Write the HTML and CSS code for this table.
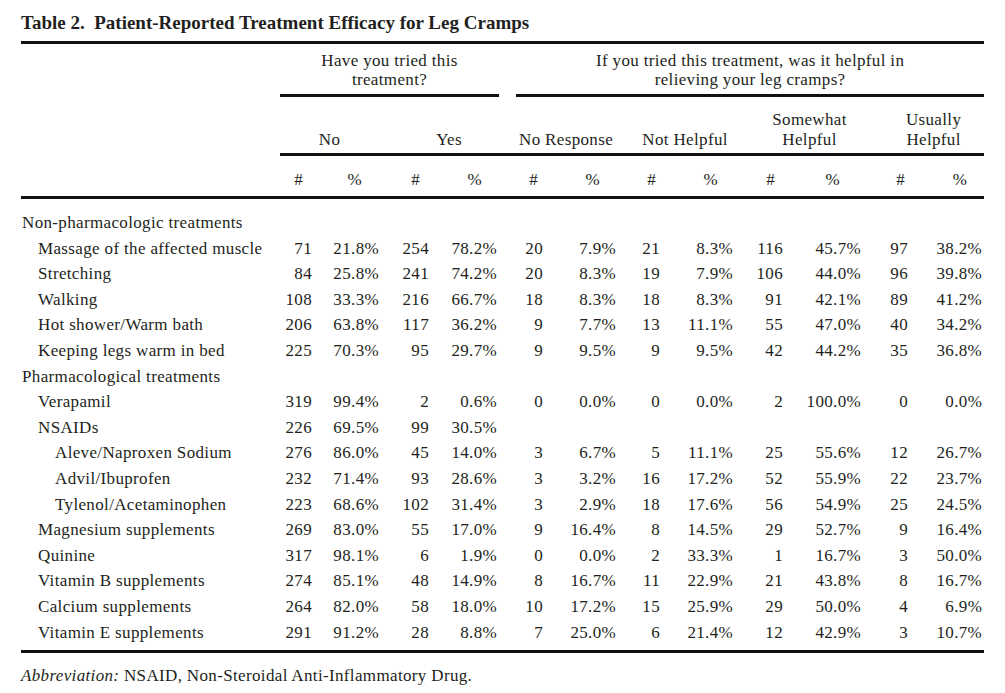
FILE: index.html
```html
<!DOCTYPE html>
<html lang="en">
<head>
<meta charset="utf-8">
<title>Table 2</title>
<link rel="stylesheet" href="styles.css">
</head>
<body>
<div class="page">
  <h1 class="title">Table 2.&nbsp; Patient-Reported Treatment Efficacy for Leg Cramps</h1>
  <table class="data">
    <colgroup>
      <col class="w-label">
      <col class="w-32"><col class="w-67"><col class="w-50"><col class="w-70">
      <col class="w-17">
      <col class="w-27"><col class="w-73"><col class="w-44"><col class="w-73">
      <col class="w-50"><col class="w-78"><col class="w-47"><col class="w-76">
    </colgroup>
    <thead>
      <tr class="grp">
        <th class="blank"></th>
        <th colspan="4" class="g">Have you tried this<br>treatment?</th>
        <th class="gap"></th>
        <th colspan="8" class="g">If you tried this treatment, was it helpful in<br>relieving your leg cramps?</th>
      </tr>
      <tr class="sub">
        <th class="blank"></th>
        <th colspan="2" class="s-no">No</th>
        <th colspan="2" class="s-yes">Yes</th>
        <th class="gap"></th>
        <th colspan="2" class="s-nr">No Response</th>
        <th colspan="2" class="s-nh">Not Helpful</th>
        <th colspan="2" class="s-sh">Somewhat<br>Helpful</th>
        <th colspan="2" class="s-uh">Usually<br>Helpful</th>
      </tr>
      <tr class="units">
        <th></th>
        <th>#</th><th>%</th><th>#</th><th>%</th>
        <th></th>
        <th>#</th><th>%</th><th>#</th><th>%</th><th>#</th><th>%</th><th>#</th><th>%</th>
      </tr>
    </thead>
    <tbody>
      <tr class="cat"><td>Non-pharmacologic treatments</td><td></td><td></td><td></td><td></td><td></td><td></td><td></td><td></td><td></td><td></td><td></td><td></td><td></td></tr>
      <tr><td class="l1">Massage of the affected muscle</td><td>71</td><td>21.8%</td><td>254</td><td>78.2%</td><td></td><td>20</td><td>7.9%</td><td>21</td><td>8.3%</td><td>116</td><td>45.7%</td><td>97</td><td>38.2%</td></tr>
      <tr><td class="l1">Stretching</td><td>84</td><td>25.8%</td><td>241</td><td>74.2%</td><td></td><td>20</td><td>8.3%</td><td>19</td><td>7.9%</td><td>106</td><td>44.0%</td><td>96</td><td>39.8%</td></tr>
      <tr><td class="l1">Walking</td><td>108</td><td>33.3%</td><td>216</td><td>66.7%</td><td></td><td>18</td><td>8.3%</td><td>18</td><td>8.3%</td><td>91</td><td>42.1%</td><td>89</td><td>41.2%</td></tr>
      <tr><td class="l1">Hot shower/Warm bath</td><td>206</td><td>63.8%</td><td>117</td><td>36.2%</td><td></td><td>9</td><td>7.7%</td><td>13</td><td>11.1%</td><td>55</td><td>47.0%</td><td>40</td><td>34.2%</td></tr>
      <tr><td class="l1">Keeping legs warm in bed</td><td>225</td><td>70.3%</td><td>95</td><td>29.7%</td><td></td><td>9</td><td>9.5%</td><td>9</td><td>9.5%</td><td>42</td><td>44.2%</td><td>35</td><td>36.8%</td></tr>
      <tr class="cat"><td>Pharmacological treatments</td><td></td><td></td><td></td><td></td><td></td><td></td><td></td><td></td><td></td><td></td><td></td><td></td><td></td></tr>
      <tr><td class="l1">Verapamil</td><td>319</td><td>99.4%</td><td>2</td><td>0.6%</td><td></td><td>0</td><td>0.0%</td><td>0</td><td>0.0%</td><td>2</td><td>100.0%</td><td>0</td><td>0.0%</td></tr>
      <tr><td class="l1">NSAIDs</td><td>226</td><td>69.5%</td><td>99</td><td>30.5%</td><td></td><td></td><td></td><td></td><td></td><td></td><td></td><td></td><td></td></tr>
      <tr><td class="l2">Aleve/Naproxen Sodium</td><td>276</td><td>86.0%</td><td>45</td><td>14.0%</td><td></td><td>3</td><td>6.7%</td><td>5</td><td>11.1%</td><td>25</td><td>55.6%</td><td>12</td><td>26.7%</td></tr>
      <tr><td class="l2">Advil/Ibuprofen</td><td>232</td><td>71.4%</td><td>93</td><td>28.6%</td><td></td><td>3</td><td>3.2%</td><td>16</td><td>17.2%</td><td>52</td><td>55.9%</td><td>22</td><td>23.7%</td></tr>
      <tr><td class="l2">Tylenol/Acetaminophen</td><td>223</td><td>68.6%</td><td>102</td><td>31.4%</td><td></td><td>3</td><td>2.9%</td><td>18</td><td>17.6%</td><td>56</td><td>54.9%</td><td>25</td><td>24.5%</td></tr>
      <tr><td class="l1">Magnesium supplements</td><td>269</td><td>83.0%</td><td>55</td><td>17.0%</td><td></td><td>9</td><td>16.4%</td><td>8</td><td>14.5%</td><td>29</td><td>52.7%</td><td>9</td><td>16.4%</td></tr>
      <tr><td class="l1">Quinine</td><td>317</td><td>98.1%</td><td>6</td><td>1.9%</td><td></td><td>0</td><td>0.0%</td><td>2</td><td>33.3%</td><td>1</td><td>16.7%</td><td>3</td><td>50.0%</td></tr>
      <tr><td class="l1">Vitamin B supplements</td><td>274</td><td>85.1%</td><td>48</td><td>14.9%</td><td></td><td>8</td><td>16.7%</td><td>11</td><td>22.9%</td><td>21</td><td>43.8%</td><td>8</td><td>16.7%</td></tr>
      <tr><td class="l1">Calcium supplements</td><td>264</td><td>82.0%</td><td>58</td><td>18.0%</td><td></td><td>10</td><td>17.2%</td><td>15</td><td>25.9%</td><td>29</td><td>50.0%</td><td>4</td><td>6.9%</td></tr>
      <tr><td class="l1">Vitamin E supplements</td><td>291</td><td>91.2%</td><td>28</td><td>8.8%</td><td></td><td>7</td><td>25.0%</td><td>6</td><td>21.4%</td><td>12</td><td>42.9%</td><td>3</td><td>10.7%</td></tr>
    </tbody>
  </table>
  <p class="note"><em>Abbreviation:</em> NSAID, Non-Steroidal Anti-Inflammatory Drug.</p>
</div>
</body>
</html>
```

FILE: styles.css
```css
html, body {
  margin: 0;
  padding: 0;
  background: #ffffff;
}

body {
  font-family: "Liberation Serif", "Times New Roman", serif;
  color: #231f20;
}

.page {
  padding: 12px 21px 0 21px;
}

.title {
  margin: 0 0 7px 0;
  font-size: 19px;
  line-height: 22px;
  font-weight: bold;
  white-space: nowrap;
}

.data {
  width: 963px;
  table-layout: fixed;
  border-collapse: separate;
  border-spacing: 0;
  border-top: 3px solid #111;
  border-bottom: 3px solid #111;
  font-size: 17px;
  letter-spacing: 0.35px;
}

.w-label { width: 259px; }
.w-17 { width: 17px; }
.w-27 { width: 27px; }
.w-32 { width: 32px; }
.w-44 { width: 44px; }
.w-47 { width: 47px; }
.w-50 { width: 50px; }
.w-67 { width: 67px; }
.w-70 { width: 70px; }
.w-73 { width: 73px; }
.w-76 { width: 76px; }
.w-78 { width: 78px; }

.data th {
  font-weight: normal;
  padding: 0;
  white-space: nowrap;
}

/* group header row */
.grp th {
  vertical-align: bottom;
  padding: 7px 0 5px 0;
  line-height: 19px;
  text-align: center;
}
.grp .g {
  border-bottom: 3px solid #111;
}

/* sub header row */
.sub th {
  vertical-align: bottom;
  padding: 13px 0 3px 0;
  line-height: 20px;
  text-align: center;
  border-bottom: 3px solid #111;
}
.sub th.blank {
  border-bottom: none;
}
.sub .s-yes { padding-left: 20px; }
.sub .s-nh { padding-left: 21px; }
.sub .s-sh { padding-left: 25px; }
.sub .s-uh { padding-left: 22px; }

/* units row */
.units th {
  padding: 14px 0 6px 0;
  line-height: 20px;
  text-align: right;
  border-bottom: 3px solid #111;
}
.units th:nth-child(2) { padding-right: 9px; }
.units th:nth-child(3) { padding-right: 17px; }
.units th:nth-child(4) { padding-right: 9px; }
.units th:nth-child(5) { padding-right: 17px; }
.units th:nth-child(7) { padding-right: 5px; }
.units th:nth-child(8) { padding-right: 16px; }
.units th:nth-child(9) { padding-right: 4px; }
.units th:nth-child(10) { padding-right: 15px; }
.units th:nth-child(11) { padding-right: 8px; }
.units th:nth-child(12) { padding-right: 21px; }
.units th:nth-child(13) { padding-right: 3px; }
.units th:nth-child(14) { padding-right: 17px; }

/* body rows */
.data td {
  padding: 0;
  line-height: 25.6px;
  text-align: right;
  white-space: nowrap;
}
.data td:first-child {
  text-align: left;
  padding-left: 1px;
}
.data td:nth-child(5),
.data td:nth-child(14) {
  padding-right: 2px;
}
.data td.l1 { padding-left: 17px; }
.data td.l2 { padding-left: 34px; }

.data tbody tr:first-child td { padding-top: 11px; }
.data tbody tr:last-child td { padding-bottom: 5px; }

.note {
  margin: 13px 0 0 0;
  font-size: 17px;
  line-height: 20px;
  letter-spacing: 0.35px;
}
.note em {
  font-style: italic;
}
```
